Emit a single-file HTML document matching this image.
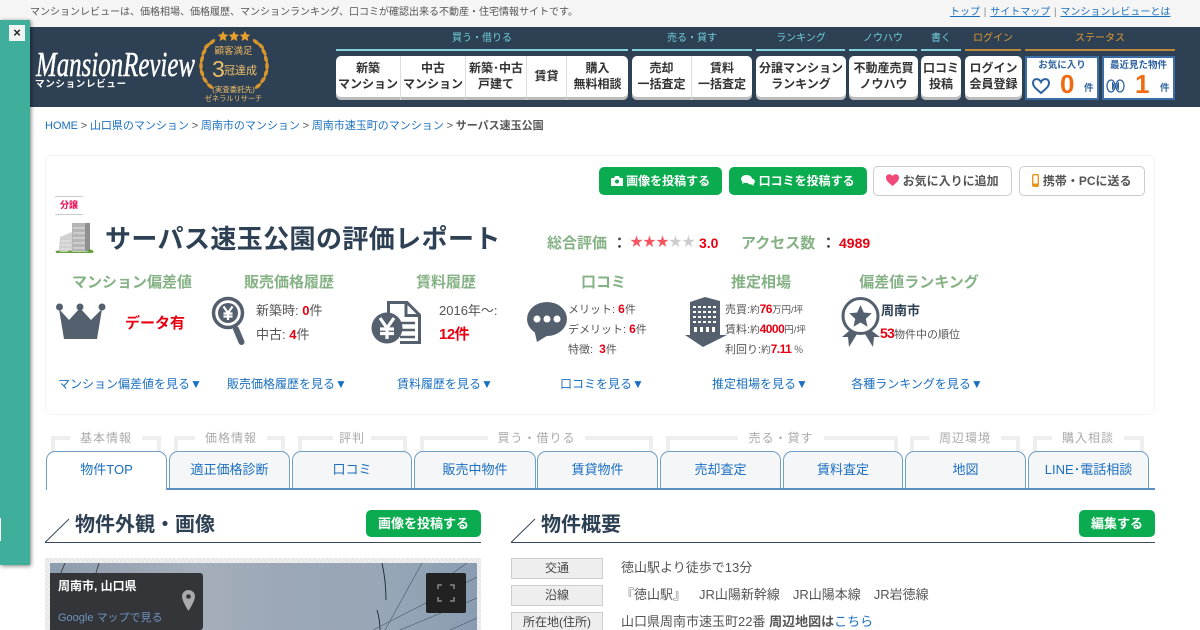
<!DOCTYPE html>
<html lang="ja"><head><meta charset="utf-8"><title>サーパス速玉公園の評価レポート</title>
<style>
*{box-sizing:border-box}
html,body{margin:0;padding:0;width:1200px;height:630px;overflow:hidden;background:#fff}
body{font-family:"Liberation Sans","Noto Sans CJK JP",sans-serif;color:#444;position:relative;text-spacing-trim:space-all}
.t{position:absolute;white-space:nowrap;line-height:1}
.c{text-align:center}
.abs{position:absolute}
a{color:#1a6fc0}
.nb{position:absolute;top:56px;height:44px;background:#fff;border-radius:5px;box-shadow:inset 0 -3px 0 #bcbcbc}
.nc{position:absolute;top:0;height:44px;text-align:center;font-size:12px;font-weight:bold;line-height:16px;color:#333;padding-top:4px;border-right:1px solid #ddd;white-space:nowrap}
.nc.l{border-right:0}
.gl{position:absolute;top:33px;font-size:10px;line-height:11px;text-align:center;color:#6fcfdc}
.gl.o{color:#e09a30}
.ln{position:absolute;top:49px;height:2px;background:#86d3e0}
.ln.o{background:#b98a3c}
.gb{position:absolute;background:#0bab4f;color:#fff;border-radius:5px;font-weight:bold;font-size:12px;text-align:center}
.wb{position:absolute;background:#fff;border:1px solid #ccc;border-radius:5px;top:166px;height:30px;font-size:12px;font-weight:bold;color:#555;line-height:29px}
.h{position:absolute;top:275px;font-size:15px;line-height:16px;color:#85b285;font-weight:bold;text-align:center;white-space:nowrap}
.lk{position:absolute;top:377px;font-size:12px;line-height:14px;color:#1a6fc0;text-align:center;white-space:nowrap}
.s{position:absolute;font-size:11px;line-height:14px;color:#555;white-space:nowrap}
.r{color:#e60012;font-weight:bold}
.tab{position:absolute;top:451px;height:37px;border:1px solid #6f9fc6;border-bottom:0;border-radius:9px 9px 0 0;background:#f5f6f8;font-size:13px;color:#1a6fc0;text-align:center;line-height:36px}
.br{position:absolute;top:436px;height:20px;border:4px solid #eee;border-bottom:0}
.bl{position:absolute;top:431px;background:#fff;font-size:12px;line-height:14px;color:#aaa;text-align:center;padding:0 6px;letter-spacing:1px;white-space:nowrap}
.lab{position:absolute;left:511px;width:92px;height:21px;background:#eee;border:1px solid #ccc;text-align:center;font-size:12px;line-height:19px;color:#444}
.val{position:absolute;left:621px;font-size:13px;line-height:15px;color:#555;white-space:nowrap}
</style></head><body>

<div class="abs" style="left:0;top:0;width:1200px;height:27px;background:#f5f5f5"></div>
<div class="t" style="left:30px;top:8px;font-size:10px;color:#555">マンションレビューは、価格相場、価格履歴、マンションランキング、口コミが確認出来る不動産・住宅情報サイトです。</div>
<div class="t" style="left:950px;top:8px;font-size:10px;color:#888"><a href="#" style="text-decoration:underline">トップ</a><span style="margin:0 3.800px">|</span><a href="#" style="text-decoration:underline">サイトマップ</a><span style="margin:0 3.800px">|</span><a href="#" style="text-decoration:underline">マンションレビューとは</a></div>

<div class="abs" style="left:0;top:27px;width:1200px;height:80px;background:#2e4053"></div>

<svg class="abs" style="left:30px;top:40px" width="170" height="52"><text x="6" y="36" font-family="Liberation Serif" font-style="italic" font-size="35" fill="#fff" stroke="#fff" stroke-width=".5" textLength="159" lengthAdjust="spacingAndGlyphs">MansionReview</text><text x="5" y="47" font-size="9.5" fill="#fff" font-weight="bold" letter-spacing=".7">マンションレビュー</text></svg>

<svg class="abs" style="left:195px;top:27px" width="80" height="80">
<g fill="#e9a02c"><path id="st" d="M39 4l1.600 3.400 3.700.4-2.800 2.500.8 3.700-3.300-1.900-3.300 1.900.8-3.700-2.800-2.500 3.700-.4z"/><use href="#st" x="-11" y="0"/><use href="#st" x="11" y="0"/></g>
<g fill="#d8962c">
<ellipse cx="17" cy="15" rx="4" ry="1.800" transform="rotate(-40 17 15)"/><ellipse cx="12" cy="19" rx="4" ry="1.800" transform="rotate(-45 12 19)"/><ellipse cx="9" cy="25" rx="4" ry="1.800" transform="rotate(-60 9 25)"/><ellipse cx="7" cy="32" rx="4" ry="1.800" transform="rotate(-75 7 32)"/><ellipse cx="6" cy="39" rx="4" ry="1.800" transform="rotate(-90 6 39)"/><ellipse cx="7" cy="46" rx="4" ry="1.800" transform="rotate(70 7 46)"/><ellipse cx="10" cy="53" rx="4" ry="1.800" transform="rotate(55 10 53)"/><ellipse cx="15" cy="59" rx="4" ry="1.800" transform="rotate(40 15 59)"/>
<ellipse cx="61" cy="15" rx="4" ry="1.800" transform="rotate(40 61 15)"/><ellipse cx="66" cy="19" rx="4" ry="1.800" transform="rotate(45 66 19)"/><ellipse cx="69" cy="25" rx="4" ry="1.800" transform="rotate(60 69 25)"/><ellipse cx="71" cy="32" rx="4" ry="1.800" transform="rotate(75 71 32)"/><ellipse cx="72" cy="39" rx="4" ry="1.800" transform="rotate(90 72 39)"/><ellipse cx="71" cy="46" rx="4" ry="1.800" transform="rotate(-70 71 46)"/><ellipse cx="68" cy="53" rx="4" ry="1.800" transform="rotate(-55 68 53)"/><ellipse cx="63" cy="59" rx="4" ry="1.800" transform="rotate(-40 63 59)"/>
</g>
<text x="38.500" y="27" font-size="9.500" fill="#e6b35c" text-anchor="middle">顧客満足</text>
<text x="17" y="50" font-size="23" fill="#efc06a">3</text>
<text x="29" y="47" font-size="11" fill="#efc06a">冠達成</text>
<text x="38.500" y="65" font-size="7.5" fill="#efc06a" text-anchor="middle">(実査委託先)</text>
<text x="38.500" y="74" font-size="7.2" fill="#efc06a" text-anchor="middle">ゼネラルリサーチ</text>
</svg>

<!-- nav -->
<div class="gl" style="left:336px;width:292px">買う・借りる</div><div class="ln" style="left:336px;width:292px"></div>
<div class="gl" style="left:632px;width:120px">売る・貸す</div><div class="ln" style="left:632px;width:120px"></div>
<div class="gl" style="left:756px;width:90px">ランキング</div><div class="ln" style="left:756px;width:89px"></div>
<div class="gl" style="left:849px;width:68px">ノウハウ</div><div class="ln" style="left:849px;width:68px"></div>
<div class="gl" style="left:921px;width:40px">書く</div><div class="ln" style="left:921px;width:40px"></div>
<div class="gl o" style="left:965px;width:56px">ログイン</div><div class="ln o" style="left:965px;width:56px"></div>
<div class="gl o" style="left:1025px;width:150px">ステータス</div><div class="ln o" style="left:1025px;width:150px"></div>

<div class="nb" style="left:336px;width:292px">
<div class="nc" style="left:0;width:65px">新築<br>マンション</div>
<div class="nc" style="left:65px;width:65px">中古<br>マンション</div>
<div class="nc" style="left:130px;width:61px">新築･中古<br>戸建て</div>
<div class="nc" style="left:191px;width:40px;padding-top:12px">賃貸</div>
<div class="nc l" style="left:231px;width:61px">購入<br>無料相談</div>
</div>
<div class="nb" style="left:632px;width:120px">
<div class="nc" style="left:0;width:60px">売却<br>一括査定</div>
<div class="nc l" style="left:60px;width:60px">賃料<br>一括査定</div>
</div>
<div class="nb" style="left:756px;width:90px"><div class="nc l" style="left:0;width:90px">分譲マンション<br>ランキング</div></div>
<div class="nb" style="left:849px;width:69px"><div class="nc l" style="left:0;width:69px">不動産売買<br>ノウハウ</div></div>
<div class="nb" style="left:921px;width:40px"><div class="nc l" style="left:0;width:40px">口コミ<br>投稿</div></div>
<div class="nb" style="left:965px;width:57px"><div class="nc l" style="left:0;width:57px">ログイン<br>会員登録</div></div>

<div class="abs" style="left:1025px;top:56px;width:74px;height:44px;background:#fff;border:2px solid #3a6ea5"></div>
<div class="t c" style="left:1025px;top:61px;width:74px;font-size:9.5px;font-weight:bold;color:#2c62a0">お気に入り</div>
<svg class="abs" style="left:1031px;top:76px" width="20" height="20" viewBox="0 0 20 20"><path d="M10 17C4 12 2 10 2 7c0-5 6-5 8-1 2-4 8-4 8 1 0 3-2 5-8 10z" fill="none" stroke="#2c62a0" stroke-width="2"/></svg>
<div class="t" style="left:1060px;top:71px;font-size:26px;font-weight:bold;color:#f26a0f">0</div>
<div class="t" style="left:1084px;top:84px;font-size:9.5px;font-weight:bold;color:#2c62a0">件</div>

<div class="abs" style="left:1102px;top:56px;width:73px;height:44px;background:#fff;border:2px solid #3a6ea5"></div>
<div class="t c" style="left:1102px;top:61px;width:73px;font-size:9.5px;font-weight:bold;color:#2c62a0">最近見た物件</div>
<svg class="abs" style="left:1106px;top:78px" width="20" height="16" viewBox="0 0 20 16"><ellipse cx="5" cy="8" rx="4" ry="6" fill="none" stroke="#2c62a0" stroke-width="1.300"/><path d="M6 4a2 4 0 0 1 0 8z" fill="#2c62a0"/><ellipse cx="14" cy="8" rx="4" ry="6" fill="none" stroke="#2c62a0" stroke-width="1.300"/><path d="M13 4a2 4 0 0 0 0 8z" fill="#2c62a0"/></svg>
<div class="t" style="left:1135px;top:71px;font-size:26px;font-weight:bold;color:#f26a0f">1</div>
<div class="t" style="left:1160px;top:84px;font-size:9.5px;font-weight:bold;color:#2c62a0">件</div>

<!-- breadcrumb -->
<div class="t" style="left:45px;top:121px;font-size:11px;color:#555;word-spacing:-.3px"><a href="#" style="text-decoration:none">HOME</a> &gt; <a href="#" style="text-decoration:none">山口県のマンション</a> &gt; <a href="#" style="text-decoration:none">周南市のマンション</a> &gt; <a href="#" style="text-decoration:none">周南市速玉町のマンション</a> &gt; <b>サーパス速玉公園</b></div>

<!-- panel -->
<div class="abs" style="left:45px;top:155px;width:1110px;height:260px;border:1px solid #f4f4f4;border-radius:6px"></div>

<div class="gb" style="left:599px;top:167px;width:123px;height:28px;line-height:28px"><svg width="12" height="10" viewBox="0 0 12 10" style="vertical-align:-1px"><path d="M0 2h3l1-2h4l1 2h3v8H0z" fill="#fff"/><circle cx="6" cy="5.500" r="2" fill="#0bab4f"/></svg> 画像を投稿する</div>
<div class="gb" style="left:729px;top:167px;width:138px;height:28px;line-height:28px"><svg width="14" height="11" viewBox="0 0 14 11" style="vertical-align:-1px"><ellipse cx="5.500" cy="4" rx="5.500" ry="4" fill="#fff"/><path d="M2 6 1 9l4-2zM10 9l3 2-1-3z" fill="#fff"/><ellipse cx="10" cy="6.500" rx="4" ry="3" fill="#fff"/></svg> 口コミを投稿する</div>
<div class="wb c" style="left:873px;width:139px"><svg width="13" height="12" viewBox="0 0 13 12" style="vertical-align:-1px"><path d="M6.500 12C1.500 8 0 6 0 3.500 0 0 4.500-1 6.500 2 8.500-1 13 0 13 3.500 13 6 11.500 8 6.500 12z" fill="#ef4a78"/></svg> お気に入りに追加</div>
<div class="wb c" style="left:1019px;width:126px"><svg width="7" height="13" viewBox="0 0 7 13" style="vertical-align:-2px"><rect x=".7" y=".7" width="5.600" height="11.600" rx="1" fill="#fff" stroke="#e8961e" stroke-width="1.400"/><rect x="1" y="9.500" width="5" height="2.500" fill="#e8961e"/></svg> 携帯・PCに送る</div>

<div class="abs" style="left:55px;top:196px;width:28px;height:19px;border-top:1px solid #ccc;border-bottom:1px solid #ccc;text-align:center;font-size:9px;font-weight:bold;line-height:16px;color:#e6004d">分譲</div>

<svg class="abs" style="left:55px;top:222px" width="39" height="32" viewBox="0 0 39 32"><rect x="17" y="1" width="18" height="28" fill="#b5b5b5"/><rect x="30" y="1" width="5" height="28" fill="#8f8f8f"/><path d="M5 15 17 10v19H4z" fill="#d0d0d0"/><g stroke="#e8e8e8"><path d="M18 6h12M18 11h12M18 16h12M18 21h12M18 26h12M6 19h10M6 23h10M6 27h10"/></g><path d="M0 30q3-3 6 0M12 30q3-3 6 0M32 30q3-5 7 0" fill="#5f9a3a"/><rect x="1" y="29.500" width="37" height="1.500" fill="#6aa544"/></svg>

<div class="t" style="left:105px;top:226px;font-size:26px;font-weight:bold;color:#2e4053;letter-spacing:.4px">サーパス速玉公園の評価レポート</div>
<div class="t" style="left:547px;top:236px;font-size:15px;font-weight:bold;color:#85b285">総合評価</div>
<div class="t" style="left:612px;top:236px;font-size:15px;font-weight:bold;color:#444">：</div>
<div class="t" style="left:630px;top:235px;font-size:13px;color:#f4555f;letter-spacing:0">★★★<span style="color:#ccc">★★</span></div>
<div class="t" style="left:699px;top:236px;font-size:14px;font-weight:bold;color:#e60012">3.0</div>
<div class="t" style="left:741px;top:236px;font-size:15px;font-weight:bold;color:#85b285">アクセス数</div>
<div class="t" style="left:821px;top:236px;font-size:15px;font-weight:bold;color:#444">：</div>
<div class="t" style="left:839px;top:236px;font-size:14px;font-weight:bold;color:#e60012">4989</div>

<div class="h" style="left:72px;width:120px">マンション偏差値</div>
<div class="h" style="left:244px;width:90px">販売価格履歴</div>
<div class="h" style="left:416px;width:60px">賃料履歴</div>
<div class="h" style="left:581px;width:45px">口コミ</div>
<div class="h" style="left:731px;width:60px">推定相場</div>
<div class="h" style="left:859px;width:120px">偏差値ランキング</div>

<!-- crown -->
<svg class="abs" style="left:55px;top:302px" width="52" height="38" viewBox="0 0 52 38"><g fill="#55606e"><circle cx="4.500" cy="5" r="3.500"/><circle cx="25" cy="5" r="3.500"/><circle cx="47" cy="5" r="3.500"/><path d="M4 7 14 18 25 6 36 18 47 7 42 37H9z"/></g></svg>
<div class="t r" style="left:125px;top:316px;font-size:15px;">データ有</div>

<!-- magnifier -->
<svg class="abs" style="left:211px;top:296px" width="36" height="52" viewBox="0 0 36 52"><circle cx="17" cy="17" r="14.500" fill="none" stroke="#55606e" stroke-width="3.500"/><circle cx="17" cy="17" r="10" fill="#55606e"/><path d="M25 33l5.500 13" stroke="#55606e" stroke-width="6" stroke-linecap="round"/><path d="M12.500 10.500 17 17l4.500-6.500M17 17v7M12.500 17.500h9M12.500 20.500h9" fill="none" stroke="#fff" stroke-width="2.200"/></svg>
<div class="s" style="left:256px;top:304px;font-size:13px">新築時: <span class="r">0</span>件</div>
<div class="s" style="left:256px;top:328px;font-size:13px">中古: <span class="r">4</span>件</div>

<!-- doc yen -->
<svg class="abs" style="left:370px;top:300px" width="52" height="46" viewBox="0 0 52 46"><path d="M18.500 13V2.500H37L49.500 15v27.500H30" fill="#fff" stroke="#55606e" stroke-width="3"/><path d="M36 2v13.500h13" fill="none" stroke="#55606e" stroke-width="3"/><path d="M30 23h15M32 30h13M30 37h15" stroke="#55606e" stroke-width="2.500"/><circle cx="17" cy="28" r="15.500" fill="#55606e"/><path d="M10 18 17 28l7-10M17 28v11M10 29h14M10 33.500h14" fill="none" stroke="#fff" stroke-width="3.200"/></svg>
<div class="s" style="left:439px;top:304px;font-size:13px">2016年～:</div>
<div class="t r" style="left:439px;top:327px;font-size:15px;letter-spacing:-.5px">12件</div>

<!-- bubble -->
<svg class="abs" style="left:526px;top:301px" width="44" height="42" viewBox="0 0 44 42"><ellipse cx="21" cy="18" ry="17" rx="20" fill="#55606e"/><path d="M8 28 11 41 24 33z" fill="#55606e"/><circle cx="11" cy="18" r="3.500" fill="#fff"/><circle cx="21" cy="18" r="3.500" fill="#fff"/><circle cx="31" cy="18" r="3.500" fill="#fff"/></svg>
<div class="s" style="left:568px;top:302px;font-size:11px">メリット: <span class="r" style="font-size:12px">6</span>件</div>
<div class="s" style="left:568px;top:322px;font-size:11px">デメリット: <span class="r" style="font-size:12px">6</span>件</div>
<div class="s" style="left:568px;top:342px;font-size:11px">特徴:&nbsp; <span class="r" style="font-size:12px">3</span>件</div>

<!-- building -->
<svg class="abs" style="left:685px;top:297px" width="42" height="50" viewBox="0 0 42 50"><path d="M5 5 20 0 35 4v34h7L18 50 0 38h5z" fill="#55606e"/><g fill="#fff"><path d="M8 9h3v2H8zM13 9h3v2h-3zM18 9h3v2h-3zM23 9h3v2h-3zM28 9h3v2h-3zM8 14h3v2H8zM13 14h3v2h-3zM18 14h3v2h-3zM23 14h3v2h-3zM28 14h3v2h-3zM8 19h3v2H8zM13 19h3v2h-3zM18 19h3v2h-3zM23 19h3v2h-3zM28 19h3v2h-3zM8 24h3v2H8zM13 24h3v2h-3zM18 24h3v2h-3zM23 24h3v2h-3zM28 24h3v2h-3zM9 30h3v5H9zM15 30h3v5h-3zM21 30h3v5h-3zM27 30h3v5h-3z"/></g></svg>
<div class="s" style="left:725px;top:302px">売買:<span style="font-size:9.500px">約</span><span class="r" style="letter-spacing:-.5px;font-size:12px">76</span><span style="font-size:9.500px">万円/坪</span></div>
<div class="s" style="left:725px;top:322px">賃料:<span style="font-size:9.500px">約</span><span class="r" style="letter-spacing:-.5px;font-size:12px">4000</span><span style="font-size:9.500px">円/坪</span></div>
<div class="s" style="left:725px;top:342px">利回り:<span style="font-size:9.500px">約</span><span class="r" style="letter-spacing:-.5px;font-size:12px">7.11</span><span style="font-size:9.500px"> ％</span></div>

<!-- badge -->
<svg class="abs" style="left:841px;top:296px" width="40" height="52" viewBox="0 0 40 52"><circle cx="19.500" cy="20" r="17.500" fill="none" stroke="#55606e" stroke-width="3"/><path d="M19.500 9l3.300 7.500 8 .8-6 5.400 1.700 8-7-4.200-7 4.200 1.700-8-6-5.400 8-.8z" fill="#55606e"/><path d="M8 35l-7 6 6 0 1 10 8-13zM31 35l8 6-6 0-1 10-8-13z" fill="#55606e"/></svg>
<div class="t" style="left:881px;top:304px;font-size:13px;font-weight:bold;color:#2e4053">周南市</div>
<div class="s" style="left:880px;top:326px;font-size:11px"><span class="r" style="font-size:14px;letter-spacing:-.8px">53</span>物件中の順位</div>

<div class="lk" style="left:58px;width:144px">マンション偏差値を見る▼</div>
<div class="lk" style="left:227px;width:120px">販売価格履歴を見る▼</div>
<div class="lk" style="left:397px;width:96px">賃料履歴を見る▼</div>
<div class="lk" style="left:560px;width:84px">口コミを見る▼</div>
<div class="lk" style="left:712px;width:96px">推定相場を見る▼</div>
<div class="lk" style="left:851px;width:132px">各種ランキングを見る▼</div>

<!-- tab group brackets -->
<div class="br" style="left:51px;width:110px"></div><div class="bl" style="left:70px;width:72px">基本情報</div>
<div class="br" style="left:174px;width:111px"></div><div class="bl" style="left:195px;width:72px">価格情報</div>
<div class="br" style="left:298px;width:109px"></div><div class="bl" style="left:333px;width:38px;padding:0">評判</div>
<div class="br" style="left:420px;width:233px"></div><div class="bl" style="left:488px;width:97px">買う・借りる</div>
<div class="br" style="left:666px;width:232px"></div><div class="bl" style="left:738px;width:86px">売る・貸す</div>
<div class="br" style="left:910px;width:110px"></div><div class="bl" style="left:929px;width:72px">周辺環境</div>
<div class="br" style="left:1033px;width:111px"></div><div class="bl" style="left:1052px;width:72px">購入相談</div>

<div class="abs" style="left:46px;top:488px;width:1109px;height:2px;background:#5b8fbf"></div>
<div class="tab" style="left:46px;width:121px;background:#fff;height:39px;z-index:2">物件TOP</div>
<div class="tab" style="left:169px;width:121px">適正価格診断</div>
<div class="tab" style="left:292px;width:120px">口コミ</div>
<div class="tab" style="left:414px;width:122px">販売中物件</div>
<div class="tab" style="left:537px;width:121px">賃貸物件</div>
<div class="tab" style="left:660px;width:121px">売却査定</div>
<div class="tab" style="left:783px;width:120px">賃料査定</div>
<div class="tab" style="left:905px;width:121px">地図</div>
<div class="tab" style="left:1028px;width:121px">LINE･電話相談</div>

<!-- section heads -->
<div class="abs" style="left:45px;top:542px;width:436px;height:1px;background:#3a4a5c"></div>
<svg class="abs" style="left:45px;top:518px" width="25" height="25"><path d="M0 24.500 24 1" stroke="#3a4a5c" stroke-width="1" fill="none"/></svg>
<div class="t" style="left:75px;top:515px;font-size:20px;font-weight:bold;color:#2e4053">物件外観・画像</div>
<div class="gb" style="left:366px;top:510px;width:115px;height:27px;line-height:27px;font-size:13px">画像を投稿する</div>

<div class="abs" style="left:511px;top:542px;width:644px;height:1px;background:#3a4a5c"></div>
<svg class="abs" style="left:511px;top:518px" width="25" height="25"><path d="M0 24.500 24 1" stroke="#3a4a5c" stroke-width="1" fill="none"/></svg>
<div class="t" style="left:541px;top:515px;font-size:20px;font-weight:bold;color:#2e4053">物件概要</div>
<div class="gb" style="left:1079px;top:510px;width:76px;height:27px;line-height:27px;font-size:13px">編集する</div>

<!-- map -->
<div class="abs" style="left:45px;top:558px;width:436px;height:72px;background:repeating-linear-gradient(45deg,#e2e2e2 0 1px,#f0f0f0 1px 3px)"></div>
<svg class="abs" style="left:50px;top:563px" width="427" height="67" viewBox="0 0 427 67">
<defs><linearGradient id="sky" x1="0" x2="1" y1="0" y2="0"><stop offset="0" stop-color="#8e9cad"/><stop offset=".35" stop-color="#a5afbb"/><stop offset=".55" stop-color="#9ba7b5"/><stop offset=".8" stop-color="#97a6b7"/><stop offset="1" stop-color="#8a9cb2"/></linearGradient></defs>
<rect width="427" height="67" fill="url(#sky)"/>
<path d="M332 0q4 18 4 37M327 47q3 10 3 20" stroke="#1c2530" stroke-width=".9" fill="none"/>
<path d="M335 67 372 0M323 67 427 14M350 67 427 35M400 12 417 0M400 67 427 55" stroke="#4a5868" stroke-width=".6" fill="none"/>
<path d="M15 0 10 12M49 0l-3 10" stroke="#333" stroke-width=".8"/>
</svg>
<div class="abs" style="left:50px;top:573px;width:153px;height:57px;background:#333539;border-radius:0 3px 3px 0"></div>
<div class="t" style="left:58px;top:580px;font-size:12px;font-weight:bold;color:#fff">周南市, 山口県</div>
<div class="t" style="left:58px;top:613px;font-size:11px;color:#6f93bd">Google マップで見る</div>
<svg class="abs" style="left:181px;top:590px" width="15" height="21" viewBox="0 0 15 21"><path d="M7.500 0A6.500 6.500 0 0 0 1 6.500C1 11 7.500 21 7.500 21S14 11 14 6.500A6.500 6.500 0 0 0 7.500 0z" fill="#aaa"/><circle cx="7.500" cy="6.500" r="2.300" fill="#333539"/></svg>
<div class="abs" style="left:426px;top:573px;width:40px;height:40px;background:#222;border-radius:2px"></div>
<svg class="abs" style="left:436px;top:583px" width="20" height="20" viewBox="0 0 20 20"><path d="M2 6V2h4M14 2h4v4M18 14v4h-4M6 18H2v-4" stroke="#888" stroke-width="1.500" fill="none"/></svg>

<!-- table -->
<div class="lab" style="top:558px">交通</div><div class="val" style="top:560px">徳山駅より徒歩で13分</div>
<div class="lab" style="top:585px">沿線</div><div class="val" style="top:587px">『徳山駅』　JR山陽新幹線　JR山陽本線　JR岩徳線</div>
<div class="lab" style="top:612px">所在地(住所)</div><div class="val" style="top:614px">山口県周南市速玉町22番 <b>周辺地図は</b><a href="#" style="text-decoration:none">こちら</a></div>

<!-- side panel -->
<div class="abs" style="left:0;top:20px;width:30px;height:545px;background:#3fae9a;box-shadow:1px 1px 4px rgba(0,0,0,.5);z-index:5"></div>
<div class="abs" style="left:9px;top:25px;width:16px;height:16px;background:#f0f5f4;z-index:6;text-align:center;font-size:13px;line-height:16px;color:#222;font-weight:bold">×</div>
<div class="abs" style="left:0;top:518px;width:1px;height:23px;background:#fff;z-index:6"></div>

</body></html>
